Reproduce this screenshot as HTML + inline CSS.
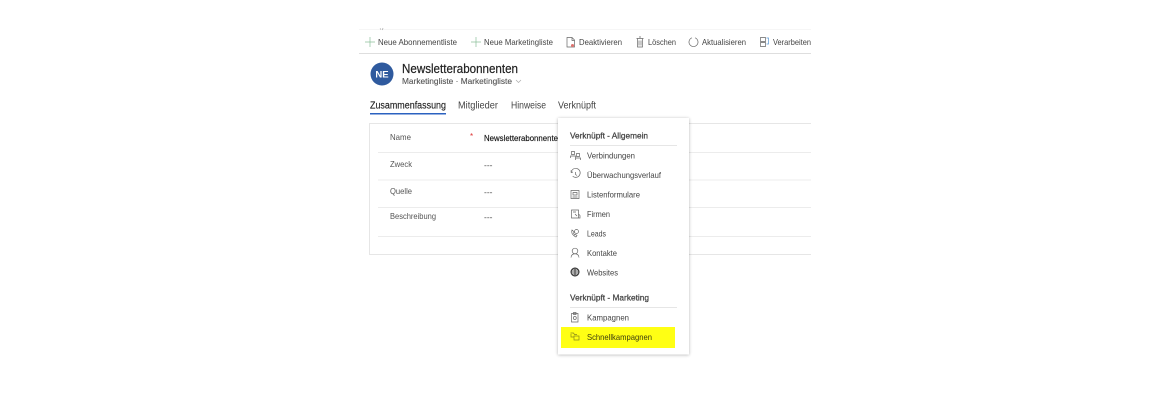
<!DOCTYPE html>
<html><head><meta charset="utf-8">
<style>
html,body{margin:0;padding:0;background:#fff;width:1170px;height:400px;overflow:hidden}
svg{display:block;filter:blur(.35px)}
text{font-family:"Liberation Sans",sans-serif;fill:#444;font-size:8.5px}
.i{fill:none;stroke:#666;stroke-width:.7}
</style></head><body>
<svg width="1170" height="400" viewBox="0 0 1170 400" xmlns="http://www.w3.org/2000/svg">
<defs><filter id="s" x="-20%" y="-20%" width="140%" height="140%"><feGaussianBlur stdDeviation="1.500"/></filter></defs>
<!-- toolbar -->
<rect x="359" y="29" width="452" height="1" fill="#f6f6f6"/>
<rect x="359" y="53" width="452" height="1" fill="#dedede"/>
<path d="M380 28.500l1 1M383 28l-.5 2" stroke="#999" stroke-width=".6" fill="none"/>
<path d="M370 37v10M365 42h10M476 37v10M471 42h10" stroke="#8cc09a" stroke-width=".7" fill="none"/>
<text x="378" y="45" textLength="79" lengthAdjust="spacingAndGlyphs">Neue Abonnementliste</text>
<text x="484" y="45" textLength="69" lengthAdjust="spacingAndGlyphs">Neue Marketingliste</text>
<path class="i" d="M567 37.500h5l2.500 2.500v7h-7.500zM572 37.500v3h2.500"/><circle cx="572.500" cy="45.500" r="1.500" fill="#e0716d"/>
<text x="579" y="45" textLength="43" lengthAdjust="spacingAndGlyphs">Deaktivieren</text>
<path class="i" d="M636.500 38.500h7M637.500 38.500v8.500h5v-8.500M639 37h2M639 40.500v5M641 40.500v5"/>
<text x="648" y="45" textLength="28" lengthAdjust="spacingAndGlyphs">Löschen</text>
<path class="i" d="M692 37.800a4.500 4.500 0 1 0 3 0"/>
<text x="702" y="45" textLength="44" lengthAdjust="spacingAndGlyphs">Aktualisieren</text>
<path class="i" d="M760.500 37.500h5v4h-5zM760.500 42.500h5v4h-5z"/><path d="M766.500 38h2v6h-2" fill="none" stroke="#5a97d4" stroke-width=".7"/>
<text x="773" y="45" textLength="38" lengthAdjust="spacingAndGlyphs">Verarbeiten</text>
<!-- header -->
<circle cx="382" cy="74" r="11.500" fill="#2f5a9e"/>
<text x="382" y="77.500" text-anchor="middle" style="font-size:9.500px;font-weight:bold;fill:#fff">NE</text>
<text x="402" y="73" textLength="116" lengthAdjust="spacingAndGlyphs" style="font-size:12.500px;fill:#222;stroke:#222;stroke-width:.2">Newsletterabonnenten</text>
<text x="402" y="84" textLength="110" lengthAdjust="spacingAndGlyphs" style="font-size:8.500px;fill:#555;stroke:#555;stroke-width:.12">Marketingliste · Marketingliste</text>
<path d="M516 80l2.500 2.500 2.500-2.500" fill="none" stroke="#aaa" stroke-width=".7"/>
<!-- tabs -->
<text x="370" y="108.500" textLength="76" lengthAdjust="spacingAndGlyphs" style="font-size:10px;fill:#222;stroke:#222;stroke-width:.15">Zusammenfassung</text>
<text x="458" y="108.500" textLength="40" lengthAdjust="spacingAndGlyphs" style="font-size:10px">Mitglieder</text>
<text x="511" y="108.500" textLength="35" lengthAdjust="spacingAndGlyphs" style="font-size:10px">Hinweise</text>
<text x="558" y="108.500" textLength="38" lengthAdjust="spacingAndGlyphs" style="font-size:10px">Verknüpft</text>
<rect x="370" y="113" width="76" height="1.500" fill="#2b62c0"/>
<!-- card -->
<path d="M811 123.500H369.500V254.500H811" fill="none" stroke="#e6e6e6"/>
<g fill="#ececec"><rect x="378" y="152" width="433" height="1"/><rect x="378" y="179.500" width="433" height="1"/><rect x="378" y="207" width="433" height="1"/><rect x="378" y="236" width="433" height="1"/></g>
<text x="390" y="140" textLength="21" lengthAdjust="spacingAndGlyphs" style="fill:#555">Name</text>
<text x="470" y="139" style="fill:#d33;font-size:8px">*</text>
<text x="484" y="141" textLength="74" lengthAdjust="spacingAndGlyphs" style="fill:#111;stroke:#111;stroke-width:.15">Newsletterabonnente</text>
<text x="390" y="167" textLength="22" lengthAdjust="spacingAndGlyphs" style="fill:#555">Zweck</text>
<text x="484" y="168">---</text>
<text x="390" y="194" textLength="22" lengthAdjust="spacingAndGlyphs" style="fill:#555">Quelle</text>
<text x="484" y="195">---</text>
<text x="390" y="219" textLength="46" lengthAdjust="spacingAndGlyphs" style="fill:#555">Beschreibung</text>
<text x="484" y="220">---</text>
<!-- menu -->
<rect x="558" y="118.500" width="131" height="236.500" fill="#000" opacity=".3" filter="url(#s)"/>
<rect x="558" y="118" width="131" height="236.500" fill="#fff"/>
<text x="570" y="138.500" textLength="78" lengthAdjust="spacingAndGlyphs" style="font-size:8.500px;stroke:#444;stroke-width:.25">Verknüpft - Allgemein</text>
<rect x="570" y="145" width="107" height="1" fill="#e6e6e6"/>
<path class="i" d="M571.500 151.500h3v3h-3zM570.500 158v-2h5v2M576.500 153.500h3v3h-3zM575.500 160v-2h5v2"/>
<text x="587" y="158.500" textLength="48" lengthAdjust="spacingAndGlyphs">Verbindungen</text>
<path class="i" d="M571.200 172.500a4.500 4.500 0 1 1 1.500 3.700M571 170.500l.2 2 1.800-.5M575.500 172v2.500l1.500 1"/>
<text x="587" y="178" textLength="74" lengthAdjust="spacingAndGlyphs">Überwachungsverlauf</text>
<path class="i" d="M571 190.500h8v8h-8zM573 192.500h4v2.500h-4zM572.500 197h5"/>
<text x="587" y="197.500" textLength="53" lengthAdjust="spacingAndGlyphs">Listenformulare</text>
<path class="i" d="M571.500 210h7v8h-7zM578.500 214l1.500 1.500v2.500h-1.500M573 212h3M575 214l2 2"/>
<text x="587" y="217" textLength="23" lengthAdjust="spacingAndGlyphs">Firmen</text>
<circle class="i" cx="576.500" cy="231.500" r="2"/><path class="i" d="M572 230c-1 3 1 6 4 7l1-1.500-1.500-1-1 .5-1-2 .8-1z"/>
<text x="587" y="236.500" textLength="19" lengthAdjust="spacingAndGlyphs">Leads</text>
<circle class="i" cx="575" cy="251" r="2.800"/><path class="i" d="M571 257.500c0-5 8-5 8 0"/>
<text x="587" y="256" textLength="30" lengthAdjust="spacingAndGlyphs">Kontakte</text>
<circle cx="575" cy="272" r="4" fill="none" stroke="#222" stroke-width="1"/><path d="M571 272h8M575 268v8M572 270h6M572 274h6" stroke="#222" stroke-width=".8" fill="none"/>
<text x="587" y="275.500" textLength="31" lengthAdjust="spacingAndGlyphs">Websites</text>
<text x="570" y="300.500" textLength="79" lengthAdjust="spacingAndGlyphs" style="font-size:8.500px;stroke:#444;stroke-width:.25">Verknüpft - Marketing</text>
<rect x="570" y="307" width="107" height="1" fill="#e6e6e6"/>
<path class="i" d="M571.500 313.500h6.500v8.500h-6.500zM573.500 312.500h2.500v2h-2.500z"/><circle class="i" cx="574.800" cy="318" r="1.500"/>
<text x="587" y="320.500" textLength="42" lengthAdjust="spacingAndGlyphs">Kampagnen</text>
<rect x="561" y="327" width="114" height="21" fill="#ffff14"/>
<path d="M570.500 333h3l1 1.500h2.500M571 334v3h3M574 336h5v4h-5z" fill="none" stroke="#88881a" stroke-width=".7"/>
<text x="587" y="340" textLength="65" lengthAdjust="spacingAndGlyphs" style="fill:#3c3c10">Schnellkampagnen</text>
</svg>
</body></html>
